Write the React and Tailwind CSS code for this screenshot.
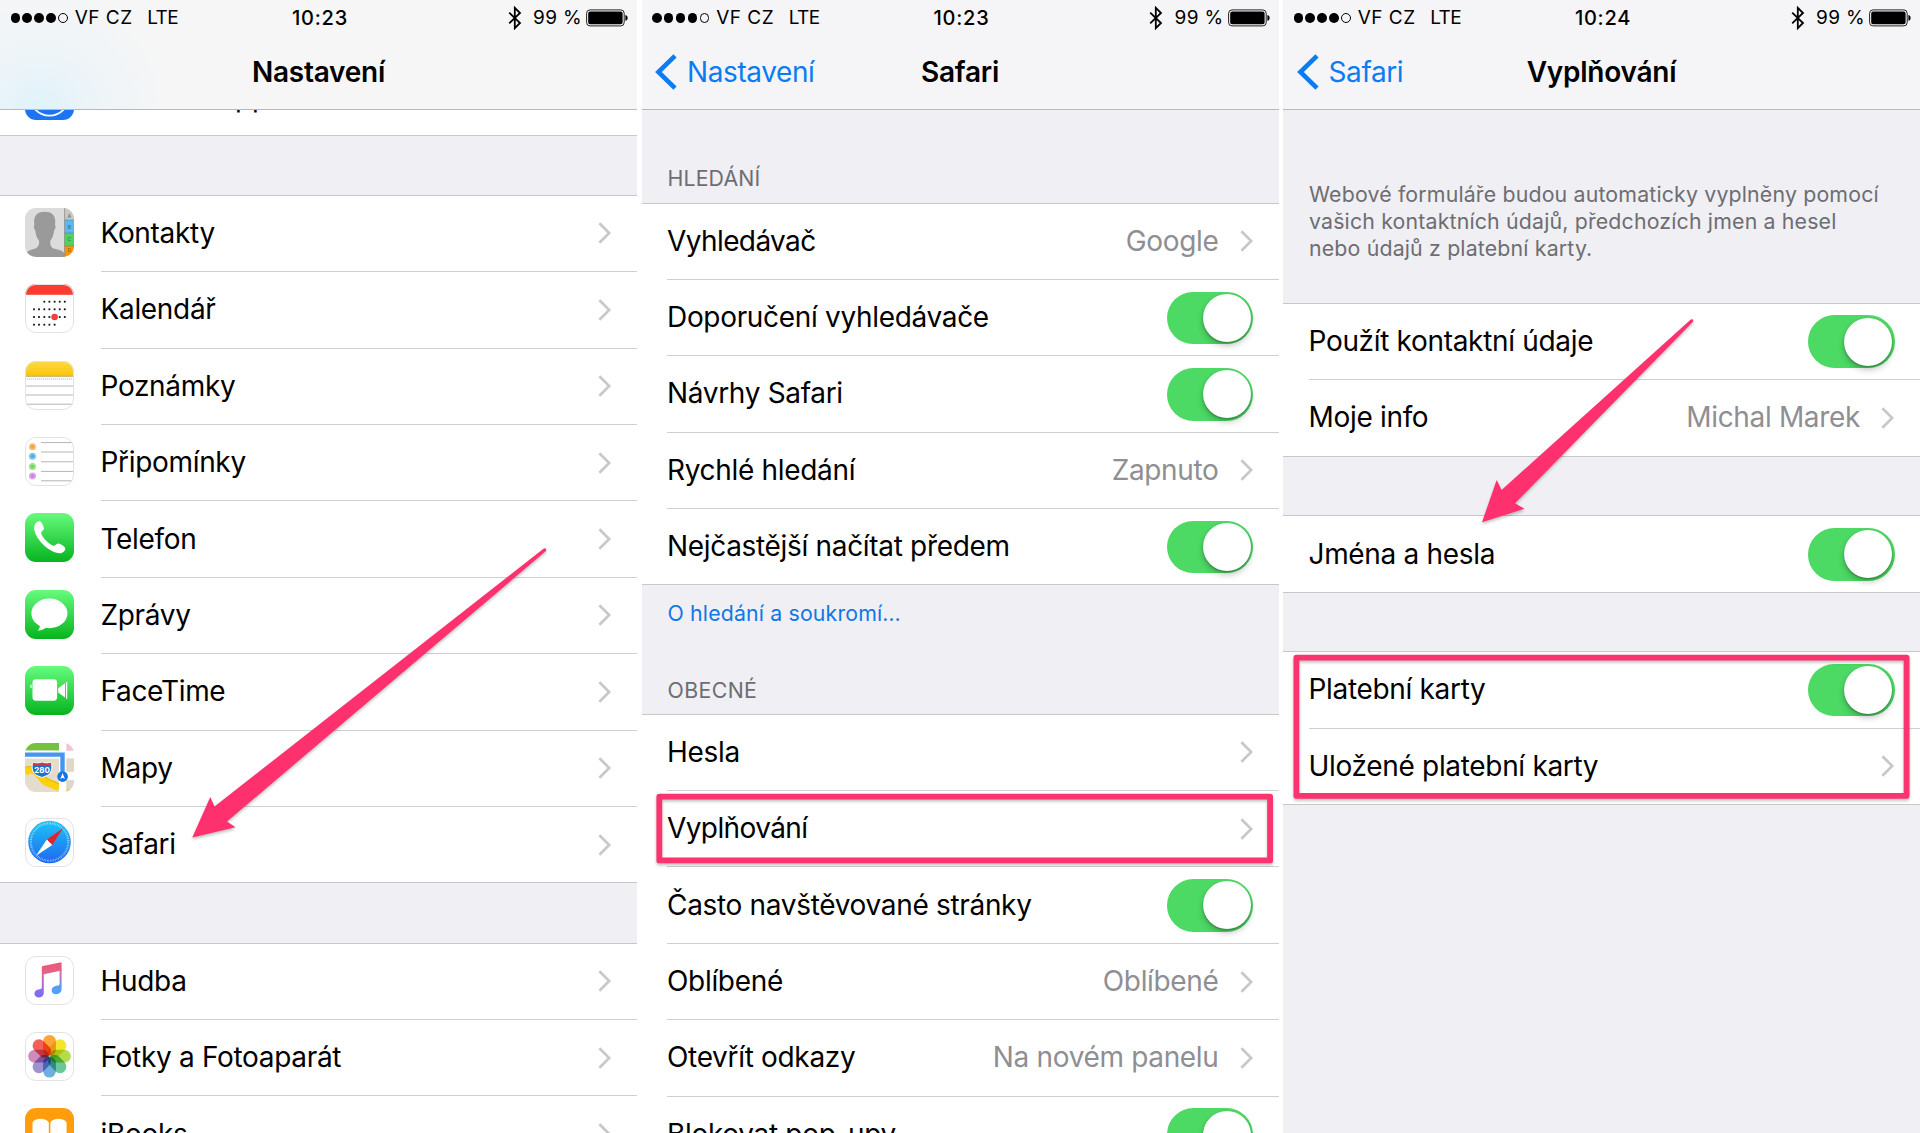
import React from 'react';

const INK = '#c7c7cc';

function Tile({ id, children, outline }) {
  return (
    <svg viewBox="0 0 49 49" className="h-[49px] w-[49px] shrink-0">
      <defs>
        <clipPath id={`tile-${id}`}>
          <rect width="49" height="49" rx="11" />
        </clipPath>
        <linearGradient id={`green-${id}`} x1="0" y1="0" x2="0" y2="1">
          <stop offset="0" stopColor="#67fb7d" />
          <stop offset="1" stopColor="#06b41f" />
        </linearGradient>
      </defs>
      <g clipPath={`url(#tile-${id})`}>{children}</g>
      {outline && <rect x="0.5" y="0.5" width="48" height="48" rx="10.5" fill="none" stroke="#e3e3e3" />}
    </svg>
  );
}

function AppStoreIcon() {
  return (
    <Tile id="appstore">
      <rect width="49" height="49" fill="#1d74f3" />
      <circle cx="24.5" cy="25" r="19.6" fill="none" stroke="#fff" strokeWidth="1.8" />
    </Tile>
  );
}

function ContactsIcon() {
  return (
    <Tile id="contacts">
      <rect width="49" height="49" fill="#dcdcdc" />
      <path
        fill="#9a9a9a"
        d="M0 49C0 43 6 41.8 10.5 40.5C13.5 39.5 14.6 36 14 32.5C11.8 30 10.6 26 10.3 22.5C8.6 20.5 8.4 18 9.4 17C8 8 12 3.8 19.7 3.8C27.4 3.8 31.4 8 30 17C31 18 30.8 20.5 29.1 22.5C28.8 26 27.6 30 25.4 32.5C24.8 36 25.8 39.5 28.8 40.5C33.5 41.8 39 43 39.6 46V49Z"
      />
      <rect x="39.6" y="0" width="10" height="12" fill="#c9c8c4" />
      <rect x="39.6" y="12" width="10" height="13" fill="#57baf1" />
      <rect x="39.6" y="25" width="10" height="13" fill="#4fd35a" />
      <rect x="39.6" y="38" width="10" height="11" fill="#ff9408" />
      <path d="M39.6 0V49M39.6 12H49M39.6 25H49M39.6 38H49" stroke="#7d7d78" strokeOpacity="0.7" strokeWidth="0.9" />
      <g fontFamily="Inter, sans-serif" fontSize="5" fontWeight="600" fill="#33434a" fillOpacity="0.6" textAnchor="middle">
        <text x="44.4" y="9.6">A</text>
        <text x="44.4" y="20.6">B</text>
        <text x="44.4" y="33.4">C</text>
        <text x="44.4" y="43.8">D</text>
      </g>
    </Tile>
  );
}

const CAL_COLUMNS = [9, 14, 19.3, 24.4, 29.6, 34.7, 39.8];
const CAL_ROWS = [
  [17.7, 2, 6],
  [25.3, 0, 6],
  [33, 0, 6],
  [40.7, 0, 4],
];

function CalendarIcon() {
  return (
    <Tile id="calendar" outline>
      <rect width="49" height="49" fill="#fff" />
      <rect width="49" height="10.8" fill="#fc3c31" />
      {CAL_ROWS.map(([y, from, to]) =>
        CAL_COLUMNS.slice(from, to + 1).map((x) => (
          <rect key={`${x}-${y}`} x={x - 0.9} y={y - 0.9} width="1.8" height="1.8" fill="#111" />
        ))
      )}
      <circle cx="29.6" cy="33" r="3.3" fill="#f4403a" />
    </Tile>
  );
}

function NotesIcon() {
  return (
    <Tile id="notes" outline>
      <defs>
        <linearGradient id="notes-top" x1="0" y1="0" x2="0" y2="1">
          <stop offset="0" stopColor="#fdd946" />
          <stop offset="1" stopColor="#fcc507" />
        </linearGradient>
      </defs>
      <rect width="49" height="49" fill="#fff" />
      <rect width="49" height="15" fill="url(#notes-top)" />
      <path d="M0 15.3H49" stroke="#b9a24e" strokeWidth="0.9" />
      <path d="M0 18H49" stroke="#aaa" strokeWidth="0.8" strokeDasharray="1.2 0.8" />
      <path d="M0 25H49M0 34H49M0 43.2H49" stroke="#b4b4b4" />
    </Tile>
  );
}

const REMINDER_DOTS = [
  [9.8, '#f5a33c'],
  [19.3, '#48aee6'],
  [29.5, '#74d75c'],
  [39, '#ca82e0'],
];

function RemindersIcon() {
  return (
    <Tile id="reminders" outline>
      <rect width="49" height="49" fill="#fff" />
      {REMINDER_DOTS.map(([y, color]) => (
        <g key={color} fill={color}>
          <circle cx="7.5" cy={y} r="3.5" fillOpacity="0.7" />
          <circle cx="7.5" cy={y} r="1.8" />
        </g>
      ))}
      <path d="M16 5.6H47.5M16 15H49M16 24.8H49M16 34.4H49M16 43.8H47.5" stroke="#b4b4b4" />
    </Tile>
  );
}

function PhoneIcon() {
  return (
    <Tile id="phone">
      <rect width="49" height="49" fill="url(#green-phone)" />
      <path
        fill="#fff"
        d="M9.2 14C9.6 10.5 12.5 8.2 14.6 8C16.2 8 19 13.6 18.9 15.6C18.8 17.6 16 18.4 16.2 20.2C17 24.4 24 31.2 28.4 32.8C30.2 33.2 31 30.7 33 30.5C35 30.3 40.4 33.8 40.4 35.4C40.2 37.6 38 40 35 40.2C24.5 40.4 8.2 24.5 9.2 14Z"
      />
    </Tile>
  );
}

function MessagesIcon() {
  return (
    <Tile id="messages">
      <rect width="49" height="49" fill="url(#green-messages)" />
      <ellipse cx="24.4" cy="23.4" rx="18" ry="14.8" fill="#fff" />
      <path d="M14.6 34C15.2 37 14.6 39 12.6 40.4C16 40.6 19.4 39.2 21.6 37Z" fill="#fff" />
    </Tile>
  );
}

function FaceTimeIcon() {
  return (
    <Tile id="facetime">
      <rect width="49" height="49" fill="url(#green-facetime)" />
      <rect x="7.5" y="13.3" width="24.6" height="21.4" rx="3.4" fill="#fff" />
      <path d="M33.2 22.3L40 17.2V31.6L33.2 26.4Z" fill="#fff" />
      <path d="M41.6 16V32.8" stroke="#fff" strokeWidth="1.2" />
      <path d="M6 18.8V22" stroke="#fff" strokeWidth="1.2" />
    </Tile>
  );
}

function MapsIcon() {
  return (
    <Tile id="maps">
      <rect width="49" height="49" fill="#e4dccd" />
      <rect width="34" height="7.6" fill="#73c13d" />
      <path d="M0 29.5C8 23 13 29.5 17.5 35.5C21 40.5 25 39.5 34 44.5" fill="none" stroke="#fdd20c" strokeWidth="8" />
      <path d="M0 24.2C9 21.8 15 26.5 19 32.5C22 37 26 36.6 34 41" fill="none" stroke="#dba80d" strokeWidth="0.8" />
      <rect x="34" width="7.5" height="49" fill="#fff" />
      <rect y="7.6" width="49" height="8" fill="#fff" />
      <rect x="41.5" y="0" width="8" height="7.6" fill="#f5c3cf" />
      <rect x="41.5" y="15.6" width="8" height="13.2" fill="#dfd8c9" />
      <rect x="41.5" y="28.8" width="8" height="8.4" fill="#fff" />
      <rect x="41.5" y="37.2" width="8" height="9" fill="#dfd8c9" />
      <rect x="41.5" y="46.2" width="8" height="3" fill="#fdd20c" />
      <path d="M0 11.6H37.5V30" fill="none" stroke="#4596ee" strokeWidth="4.4" />
      <path d="M8.4 19.4C11 20.6 14 20.4 17 19.2C20 20.4 23 20.6 25.6 19.4C28 23 26.8 29 23.8 31.4C21.4 33.4 19 33.2 17 34.6C15 33.2 12.6 33.4 10.2 31.4C7.2 29 6 23 8.4 19.4Z" fill="#1a72d2" stroke="#fff" strokeWidth="1" />
      <path d="M8.4 19.7C11 20.8 14 20.6 17 19.5C20 20.6 23 20.8 25.6 19.7L26.4 22.2H7.6Z" fill="#d8343c" />
      <text x="17" y="29.8" fontFamily="Inter, sans-serif" fontSize="8" fontWeight="700" fill="#fff" textAnchor="middle">280</text>
      <circle cx="37.6" cy="33.6" r="5.3" fill="#1575e6" />
      <path d="M37.6 30L39.9 36L37.6 34.8L35.3 36Z" fill="#fff" />
    </Tile>
  );
}

function SafariIcon() {
  return (
    <Tile id="safari" outline>
      <defs>
        <linearGradient id="safari-face" x1="0" y1="0" x2="0" y2="1">
          <stop offset="0" stopColor="#1fc4f6" />
          <stop offset="1" stopColor="#1e68f0" />
        </linearGradient>
      </defs>
      <rect width="49" height="49" fill="#fff" />
      <circle cx="24.5" cy="24" r="21.3" fill="url(#safari-face)" />
      <circle cx="24.5" cy="24" r="18.7" fill="none" stroke="#fff" strokeOpacity="0.65" strokeWidth="2.2" strokeDasharray="0.6 1.04" />
      <path d="M38 10.3L27.2 27L21.8 21.4Z" fill="#e0262b" />
      <path d="M11 37.8L27.2 27L21.8 21.4Z" fill="#fff" />
    </Tile>
  );
}

function MusicIcon() {
  return (
    <Tile id="music" outline>
      <defs>
        <linearGradient id="note-ink" gradientUnits="userSpaceOnUse" x1="20" y1="8" x2="24" y2="41">
          <stop offset="0" stopColor="#f0566f" />
          <stop offset="0.35" stopColor="#dd6699" />
          <stop offset="0.7" stopColor="#9a6ee8" />
          <stop offset="1" stopColor="#6f6bfa" />
        </linearGradient>
        <linearGradient id="note-right" gradientUnits="userSpaceOnUse" x1="0" y1="8" x2="0" y2="37">
          <stop offset="0" stopColor="#ef5a72" />
          <stop offset="0.35" stopColor="#d66ba6" />
          <stop offset="0.75" stopColor="#5b99f0" />
          <stop offset="1" stopColor="#48a6f8" />
        </linearGradient>
      </defs>
      <rect width="49" height="49" fill="#fff" />
      <path d="M16.8 11.2Q16.8 10.2 17.8 10L35.2 6.4Q36.6 6.2 36.6 7.4V14.6L18.8 18.2V36.4C18.8 39.4 16.4 41.4 13.6 41.4C11 41.4 9.4 39.8 9.4 37.6C9.4 35 11.6 33.6 14.4 33.2C16.2 32.9 16.8 32.6 16.8 31.2Z" fill="url(#note-ink)" />
      <path d="M34.6 13.6L36.6 13V33C36.6 36 34.2 38.2 31.2 38.2C28.4 38.2 26.6 36.6 26.6 34.4C26.6 31.8 28.8 30.2 31.8 29.8C34 29.6 34.6 29.2 34.6 27.8Z" fill="url(#note-right)" />
    </Tile>
  );
}

const PETALS = ['#f9a63a', '#f3e62f', '#b4db4c', '#6ac79b', '#6fafe0', '#9d93d0', '#d08abb', '#f2605a'];

function PhotosIcon() {
  return (
    <Tile id="photos" outline>
      <rect width="49" height="49" fill="#fff" />
      {PETALS.map((color, i) => (
        <rect
          key={color}
          x="18.1"
          y="2.9"
          width="12.8"
          height="20.8"
          rx="6.4"
          fill={color}
          transform={`rotate(${i * 45} 24.5 24.2)`}
          className="mix-blend-multiply"
        />
      ))}
    </Tile>
  );
}

function BooksIcon() {
  return (
    <Tile id="books">
      <rect width="49" height="49" fill="#ff9d0c" />
      <path d="M7.5 14.6C10 9.6 21 9.6 23.8 14.6V38C19 35 12 35 7.5 38Z" fill="#fff" />
      <path d="M41.6 14.6C39 9.6 28.2 9.6 25.4 14.6V38C30 35 37 35 41.6 38Z" fill="#fff" />
    </Tile>
  );
}

function Chevron() {
  return (
    <svg viewBox="0 0 13 22" className="h-[22px] w-[13px] shrink-0" fill="none">
      <path d="M1.4 1.2L11.2 11L1.4 20.8" stroke={INK} strokeWidth="2.7" />
    </svg>
  );
}

function Toggle() {
  return (
    <div className="-mr-[0.6px] mt-[0.5px] flex h-[52.6px] w-[86.6px] shrink-0 items-center justify-end rounded-full bg-[#4cd964] pr-[2.2px]">
      <div className="h-[48px] w-[48px] rounded-full bg-white shadow-[0_4px_6px_rgba(0,0,0,0.22),0_1px_2px_rgba(0,0,0,0.3)]" />
    </div>
  );
}

function Row({ icon, label, value, toggle, last, tight }) {
  return (
    <div className={`flex h-[76.4px] shrink-0 bg-white ${last ? 'border-b border-[#c8c7cc]' : ''}`}>
      {icon && <div className="flex w-[100.5px] shrink-0 items-center pb-[3.4px] pl-[25.2px]">{icon}</div>}
      <div
        className={`flex min-w-0 grow items-center pr-[26px] ${icon ? '' : 'ml-[25.5px]'} ${last ? '' : 'border-b border-[#d0cfd3]'}`}
      >
        <span className={`grow whitespace-nowrap pb-[1px] text-[28px] leading-[34px] text-black ${tight ? 'tracking-[-0.6px]' : 'tracking-[-0.32px]'}`}>
          {label}
        </span>
        {value && (
          <span className="mr-[21px] whitespace-nowrap pb-[1px] text-[28px] leading-[34px] tracking-[-0.34px] text-[#8e8e93]">{value}</span>
        )}
        {toggle ? <Toggle /> : <Chevron />}
      </div>
    </div>
  );
}

function Group({ rows, open }) {
  return (
    <div className="shrink-0 border-t border-[#c8c7cc]">
      {rows.map((row, i) => (
        <Row key={row.label} {...row} last={!open && i === rows.length - 1} />
      ))}
    </div>
  );
}

function StatusBar({ time }) {
  return (
    <div className="grid h-[36px] grid-cols-[1fr_auto_1fr] items-center text-[19px] leading-[24px] text-black">
      <div className="flex items-center pl-[10.5px]">
        <div className="flex gap-[2.3px]">
          <i className="h-[9.6px] w-[9.6px] rounded-full bg-black" />
          <i className="h-[9.6px] w-[9.6px] rounded-full bg-black" />
          <i className="h-[9.6px] w-[9.6px] rounded-full bg-black" />
          <i className="h-[9.6px] w-[9.6px] rounded-full bg-black" />
          <i className="h-[9.6px] w-[9.6px] rounded-full border border-black" />
        </div>
        <span className="ml-[7px] tracking-[0.5px]">VF CZ</span>
        <span className="ml-[14.5px] tracking-[-0.5px]">LTE</span>
      </div>
      <span className="pl-[3px] text-[20px] font-medium tracking-[0.75px]">{time}</span>
      <div className="flex items-center justify-end pr-[9px]">
        <svg viewBox="0 0 14 24" className="h-[24px] w-[14px]" fill="none">
          <path d="M1.2 6.6L12 17L6.8 22.2V1.8L12 7L1.2 17.4" stroke="#000" strokeWidth="1.8" />
        </svg>
        <span className="ml-[11.5px] tracking-[0.35px]">99 %</span>
        <svg viewBox="0 0 42 18" className="ml-[4px] h-[18px] w-[42px]">
          <rect x="0.6" y="0.9" width="37.6" height="16" rx="3.4" fill="none" stroke="#222" strokeWidth="1" />
          <rect x="2.2" y="2.5" width="34.4" height="12.8" rx="2" fill="#000" />
          <path d="M39.4 6V11.8C41 11.4 41.6 10.2 41.6 8.9C41.6 7.6 41 6.4 39.4 6Z" fill="#000" />
        </svg>
      </div>
    </div>
  );
}

function Header({ time, title, back, className }) {
  return (
    <div className={`relative z-10 h-[110px] shrink-0 border-b border-[#b9b9bd] ${className}`}>
      <StatusBar time={time} />
      <div className="grid h-[71px] grid-cols-[1fr_auto_1fr] items-center text-[28px] leading-[34px]">
        <div className="flex items-center pl-[13.5px] text-[#0b7cf2]">
          {back && (
            <>
              <svg viewBox="0 0 22 36" className="h-[36px] w-[22px]" fill="none">
                <path d="M20 1.8L3.4 18L20 34.2" stroke="currentColor" strokeWidth="4.6" />
              </svg>
              <span className="ml-[10px] tracking-[-0.4px]">{back}</span>
            </>
          )}
        </div>
        <h1 className="font-semibold tracking-[-0.25px] text-black">{title}</h1>
        <div />
      </div>
    </div>
  );
}

function Phone({ children }) {
  return (
    <section className="flex h-[1133px] w-[637px] shrink-0 flex-col overflow-hidden bg-[#efeff4]">{children}</section>
  );
}

const APPS = [
  { label: 'Kontakty', icon: <ContactsIcon /> },
  { label: 'Kalendář', icon: <CalendarIcon /> },
  { label: 'Poznámky', icon: <NotesIcon /> },
  { label: 'Připomínky', icon: <RemindersIcon /> },
  { label: 'Telefon', icon: <PhoneIcon /> },
  { label: 'Zprávy', icon: <MessagesIcon /> },
  { label: 'FaceTime', icon: <FaceTimeIcon /> },
  { label: 'Mapy', icon: <MapsIcon /> },
  { label: 'Safari', icon: <SafariIcon /> },
];

const MEDIA = [
  { label: 'Hudba', icon: <MusicIcon /> },
  { label: 'Fotky a Fotoaparát', icon: <PhotosIcon /> },
  { label: 'iBooks', icon: <BooksIcon /> },
];

const SEARCH = [
  { label: 'Vyhledávač', value: 'Google', tight: true },
  { label: 'Doporučení vyhledávače', toggle: true },
  { label: 'Návrhy Safari', toggle: true },
  { label: 'Rychlé hledání', value: 'Zapnuto' },
  { label: 'Nejčastější načítat předem', toggle: true },
];

const GENERAL = [
  { label: 'Hesla' },
  { label: 'Vyplňování', tight: true },
  { label: 'Často navštěvované stránky', toggle: true },
  { label: 'Oblíbené', value: 'Oblíbené' },
  { label: 'Otevřít odkazy', value: 'Na novém panelu' },
  { label: 'Blokovat pop-upy', toggle: true },
];

function SettingsPhone() {
  return (
    <Phone>
      <Header
        time="10:23"
        title="Nastavení"
        className="bg-[radial-gradient(circle_at_40px_112px,#def3fb_0px,#eef4f8_60px,#f6f6f6_130px)]"
      />
      <div className="-mt-[50.6px] shrink-0">
        <Row label="iTunes a App Store" icon={<AppStoreIcon />} last />
      </div>
      <div className="h-[59px] shrink-0" />
      <Group rows={APPS} />
      <div className="h-[59.4px] shrink-0" />
      <Group rows={MEDIA} open />
    </Phone>
  );
}

function SafariPhone() {
  return (
    <Phone>
      <Header time="10:23" title="Safari" back="Nastavení" className="bg-[#f5f5f7]" />
      <div className="flex h-[92.5px] shrink-0 items-end pb-[12px] pl-[26px] text-[21.3px] leading-[26px] tracking-[0.15px] text-[#6d6d72]">
        HLEDÁNÍ
      </div>
      <Group rows={SEARCH} />
      <div className="flex h-[128.2px] shrink-0 flex-col justify-between pb-[11px] pl-[26px] pt-[15px] text-[21.3px] leading-[26px]">
        <a className="tracking-[0.16px] text-[#0f77e6]">O hledání a soukromí…</a>
        <span className="tracking-[0.4px] text-[#6d6d72]">OBECNÉ</span>
      </div>
      <Group rows={GENERAL} open />
    </Phone>
  );
}

function AutofillPhone() {
  return (
    <Phone>
      <Header time="10:24" title="Vyplňování" back="Safari" className="bg-[#f5f5f7]" />
      <p className="h-[192.8px] shrink-0 whitespace-nowrap pl-[26px] pt-[71px] text-[21.3px] leading-[27.2px] tracking-[0.175px] text-[#6d6d72]">
        Webové formuláře budou automaticky vyplněny pomocí
        <br />
        vašich kontaktních údajů, předchozích jmen a hesel
        <br />
        nebo údajů z platební karty.
      </p>
      <Group
        rows={[
          { label: 'Použít kontaktní údaje', toggle: true },
          { label: 'Moje info', value: 'Michal Marek' },
        ]}
      />
      <div className="h-[58.9px] shrink-0" />
      <Group rows={[{ label: 'Jména a hesla', toggle: true }]} />
      <div className="h-[58.3px] shrink-0" />
      <Group rows={[{ label: 'Platební karty', toggle: true }, { label: 'Uložené platební karty' }]} />
    </Phone>
  );
}

function Annotations() {
  return (
    <svg viewBox="0 0 1920 1133" className="pointer-events-none absolute inset-0 z-20 h-[1133px] w-[1920px] drop-shadow-[0_2px_1.5px_rgba(0,0,0,0.25)]">
      <g fill="#ff306e">
        <path d="M192.3 837.5L210.3 797L214.5 806.5L543.8 548.6Q546.6 547.6 546.2 550.8L227 821.5L235.5 827.3Z" />
        <path d="M1482 522.3L1496.7 480L1501.6 490L1690.8 319.4Q1693.8 318.6 1693.2 321.6L1515 503.3L1524.5 508.7Z" />
      </g>
      <g fill="none" stroke="#fa346f" strokeWidth="5.8" strokeLinejoin="round">
        <rect x="659.3" y="796.6" width="610.8" height="63.8" />
        <rect x="1296.4" y="657.6" width="610.2" height="138.2" />
      </g>
    </svg>
  );
}

export default function App() {
  return (
    <main className="relative flex h-[1133px] w-[1920px] justify-between overflow-hidden bg-white font-['Inter',sans-serif] antialiased">
      <SettingsPhone />
      <SafariPhone />
      <AutofillPhone />
      <Annotations />
    </main>
  );
}
